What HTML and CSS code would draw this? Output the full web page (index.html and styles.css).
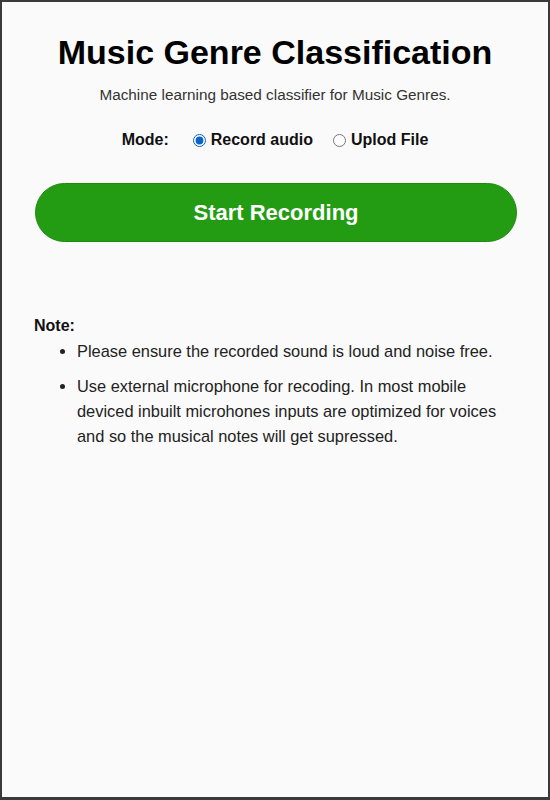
FILE: index.html
```html
<!DOCTYPE html>
<html>
<head>
<meta charset="utf-8">
<link rel="stylesheet" href="styles.css">
</head>
<body>
<div class="frame">
  <header class="header">
    <h1 class="title">Music Genre Classification</h1>
    <p class="subtitle">Machine learning based classifier for Music Genres.</p>
  </header>
  <div class="mode">
    <span class="mode-label">Mode:</span>
    <label class="option"><input type="radio" name="mode" checked> Record audio</label>
    <label class="option"><input type="radio" name="mode"> Uplod File</label>
  </div>
  <div class="action">
    <button class="record-btn">Start Recording</button>
  </div>
  <section class="notes">
    <div class="notes-title">Note:</div>
    <ul class="notes-list">
      <li>Please ensure the recorded sound is loud and noise free.</li>
      <li>Use external microphone for recoding. In most mobile deviced inbuilt microhones inputs are optimized for voices and so the musical notes will get supressed.</li>
    </ul>
  </section>
</div>
</body>
</html>
```

FILE: styles.css
```css
html, body {
  margin: 0;
  padding: 0;
}
body {
  font-family: "Liberation Sans", Arial, sans-serif;
  background: #3a3a3a;
}
.frame {
  box-sizing: border-box;
  width: 550px;
  height: 800px;
  border: 2px solid #3a3a3a;
  border-bottom-width: 3px;
  background: #fafafa;
  display: flex;
  flex-direction: column;
}
.header {
  text-align: center;
  padding-top: 28px;
}
.title {
  margin: 0;
  font-size: 34px;
  font-weight: bold;
  color: #000;
  line-height: 44px;
}
.subtitle {
  margin: 12px 0 0;
  font-size: 15.3px;
  color: #333;
}
.mode {
  display: flex;
  justify-content: center;
  align-items: center;
  margin-top: 27px;
  font-size: 16px;
  font-weight: bold;
  color: #111;
}
.mode-label {
  margin-right: 22px;
}
.option {
  display: flex;
  align-items: center;
  margin-right: 18px;
}
.option:last-child {
  margin-right: 0;
}
.option input {
  margin: 0 5px 0 2px;
  width: 13px;
  height: 13px;
  accent-color: #0b63c4;
}
.action {
  padding: 0 31px 0 33px;
  margin-top: 34px;
}
.record-btn {
  display: block;
  width: 100%;
  height: 59px;
  border: 1px solid #1e8a10;
  border-radius: 30px;
  background: #239c13;
  color: #fff;
  font-family: "Liberation Sans", Arial, sans-serif;
  font-size: 22px;
  font-weight: bold;
}
.notes {
  margin-top: 75px;
  padding-left: 32px;
  width: 468px;
}
.notes-title {
  font-size: 16px;
  font-weight: bold;
  color: #111;
}
.notes-list {
  margin: 4px 0 0;
  padding-left: 43px;
  font-size: 16.4px;
  line-height: 25px;
  color: #222;
}
.notes-list li {
  margin-bottom: 10px;
}
```
